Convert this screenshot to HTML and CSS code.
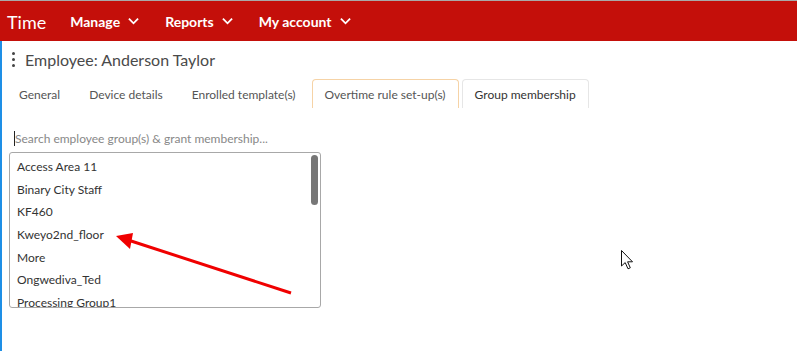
FILE: index.html
```html
<!DOCTYPE html>
<html>
<head>
<meta charset="utf-8">
<link rel="stylesheet" href="styles.css">
</head>
<body>
<div class="topline"></div>
<header class="nav">
  <span class="brand">Time</span>
  <span class="menu">Manage <svg class="chev" viewBox="0 0 12 8"><path d="M1 1.5 L6 6.5 L11 1.5"/></svg></span>
  <span class="menu">Reports <svg class="chev" viewBox="0 0 12 8"><path d="M1 1.5 L6 6.5 L11 1.5"/></svg></span>
  <span class="menu">My account <svg class="chev" viewBox="0 0 12 8"><path d="M1 1.5 L6 6.5 L11 1.5"/></svg></span>
</header>
<main class="page">
  <div class="title">
    <span class="kebab"><i></i><i></i><i></i></span>
    <span>Employee: Anderson Taylor</span>
  </div>
  <nav class="tabs">
    <span class="tab">General</span>
    <span class="tab">Device details</span>
    <span class="tab">Enrolled template(s)</span>
    <span class="tab tab-hover">Overtime rule set-up(s)</span>
    <span class="tab tab-active">Group membership</span>
  </nav>
  <div class="search"><span class="caret"></span>Search employee group(s) &amp; grant membership...</div>
  <div class="list">
    <div class="item">Access Area 11</div>
    <div class="item">Binary City Staff</div>
    <div class="item">KF460</div>
    <div class="item">Kweyo2nd_floor</div>
    <div class="item">More</div>
    <div class="item">Ongwediva_Ted</div>
    <div class="item">Processing Group1</div>
    <div class="thumb"></div>
  </div>
</main>
<svg class="arrow" viewBox="0 0 797 351" width="797" height="351">
  <line x1="291" y1="293" x2="128" y2="240" stroke="#f00000" stroke-width="3"/>
  <polygon points="116,236 133,233 130,249" fill="#f00000"/>
</svg>
<svg class="cursor" viewBox="0 0 13 20" width="13" height="20">
  <path d="M0.5 0.5 L0.5 16 L4.2 12.6 L7 18.8 L9.3 17.8 L6.6 11.8 L11.5 11.8 Z" fill="#fff" stroke="#111" stroke-width="1"/>
</svg>
</body>
</html>
```
FILE: styles.css
```css
* { box-sizing: border-box; }
html, body { margin: 0; padding: 0; background: #fff; }
body {
  font-family: Lato, "Open Sans", sans-serif;
  width: 797px;
  height: 351px;
  overflow: hidden;
  position: relative;
}
.topline { height: 1px; background: #a9a9a9; }
.nav {
  height: 40px;
  background: #c40f0a;
  display: flex;
  align-items: center;
  color: #fff;
  padding-left: 7px;
}
.brand { font-size: 18px; margin-right: 24px; margin-top: 1px; }
.menu {
  font-size: 14px;
  font-weight: 700;
  display: flex;
  align-items: center;
  margin-right: 26px;
}
.chev {
  width: 11px;
  height: 8px;
  margin-left: 8px;
  fill: none;
  stroke: #fff;
  stroke-width: 2;
}
.page {
  border-left: 2px solid #1e8fe6;
  height: 310px;
  padding-left: 7px;
}
.title {
  display: flex;
  align-items: center;
  height: 37px;
  font-size: 16px;
  color: #4a4a4a;
}
.kebab {
  display: flex;
  flex-direction: column;
  gap: 3px;
  margin-left: 3px;
  margin-right: 10px;
}
.kebab i { width: 3px; height: 3px; background: #444; border-radius: 50%; display: block; }
.tabs {
  display: flex;
  height: 29px;
  margin-top: 1px;
  margin-left: -3px;
  font-size: 12px;
  color: #555;
}
.tab {
  display: flex;
  align-items: center;
  padding: 0 12px;
  border: 1px solid transparent;
  border-bottom: none;
  border-radius: 4px 4px 0 0;
  margin-right: 3px;
}
.tab-hover { border-color: #f6d3a6; }
.tab-active { border-color: #e6e6e6; color: #333; }
.search {
  margin-top: 20px;
  margin-left: 5px;
  height: 20px;
  font-size: 12px;
  color: #888;
  display: flex;
  align-items: center;
}
.caret { width: 1px; height: 15px; background: #222; }
.list {
  position: relative;
  margin-top: 4px;
  width: 312px;
  height: 156px;
  border: 1px solid #a8a8a8;
  border-radius: 3px;
  overflow: hidden;
  padding-top: 2px;
}
.item {
  height: 22.7px;
  display: flex;
  align-items: center;
  padding-left: 7px;
  font-size: 12px;
  color: #333;
}
.thumb {
  position: absolute;
  right: 2px;
  top: 2px;
  width: 7px;
  height: 50px;
  background: #777;
  border-radius: 4px;
}
.arrow { position: absolute; left: 0; top: 0; pointer-events: none; }
.cursor { position: absolute; left: 621px; top: 250px; }
```
